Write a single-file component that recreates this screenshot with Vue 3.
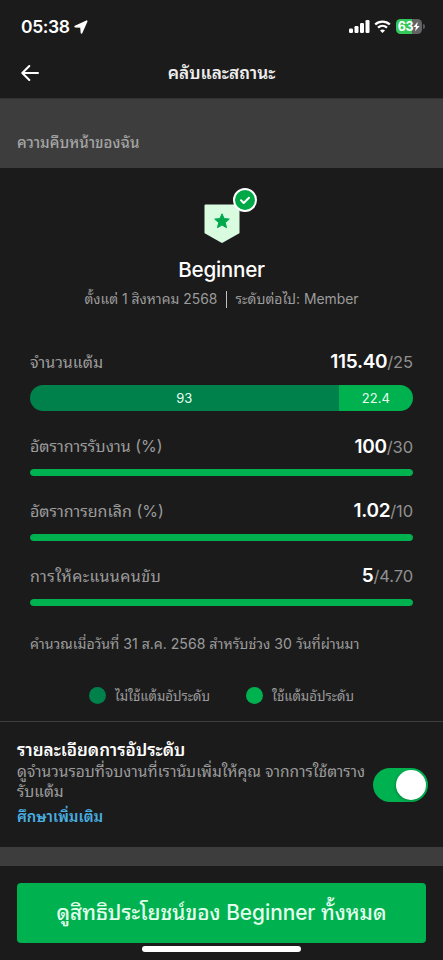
<script setup>
const points = [
  { value: '93', share: 80.6, tone: 'dark' },
  { value: '22.4', share: 19.4, tone: 'light' },
]

const metrics = [
  { label: 'อัตราการรับงาน (%)', value: '100', target: '30', progress: 100, size: 'rate' },
  { label: 'อัตราการยกเลิก (%)', value: '1.02', target: '10', progress: 100, size: 'cancel' },
  { label: 'การให้คะแนนคนขับ', value: '5', target: '4.70', progress: 100, size: 'rating' },
]
</script>

<template>
  <div class="screen">
    <div class="status-bar">
      <div class="clock">
        <span class="time">05:38</span>
        <svg class="location" viewBox="0 0 14 14"><path d="M12.700 1.200 1.200 6.600 7 7 7.500 12.900Z" /></svg>
      </div>
      <div class="indicators">
        <svg class="signal" viewBox="0 0 21 13">
          <rect x="0" y="8.500" width="4" height="4.500" rx="1.200" />
          <rect x="5.500" y="6" width="4" height="7" rx="1.200" />
          <rect x="11" y="3" width="4" height="10" rx="1.200" />
          <rect x="16.500" y="0" width="4" height="13" rx="1.200" />
        </svg>
        <svg class="wifi" viewBox="0 0 17 13">
          <path d="M1.200 4.500C5.200.6 11.800.6 15.800 4.500M4 7.700c2.600-2.400 6.400-2.400 9 0" />
          <path class="wifi-dot" d="M8.500 12.900 6 10.400c1.300-1.300 3.700-1.300 5 0Z" />
        </svg>
        <div class="battery">
          <span class="charge">63</span>
          <svg class="bolt" viewBox="0 0 8 11"><path d="M5.600.2.4 6.100h3L2.300 10.800 7.600 4.800H4.500Z" /></svg>
        </div>
        <span class="battery-tip"></span>
      </div>
    </div>

    <header class="nav">
      <svg class="back" viewBox="0 0 18 16"><path d="M17 8H1.500M8.300 1 1.300 8l7 7" /></svg>
      <h1 class="title"><span>คลับและสถานะ</span></h1>
    </header>

    <div class="section-head"><span>ความคืบหน้าของฉัน</span></div>

    <section class="profile">
      <div class="badge">
        <svg class="shield" viewBox="0 0 36 40">
          <path class="shield-body" d="M1.500.5h33a1 1 0 0 1 1 1v27.200a1 1 0 0 1-.6.9L19 38.600a2 2 0 0 1-2 0L1.100 29.600a1 1 0 0 1-.6-.9V1.500a1 1 0 0 1 1-1Z" />
          <path class="star" d="m18 9.800 2.100 4.800 5.200.5-4 3.500 1.200 5.100-4.500-2.700-4.500 2.700 1.200-5.100-4-3.500 5.200-.5Z" />
        </svg>
        <svg class="check" viewBox="0 0 24 24">
          <circle cx="12" cy="12" r="11" />
          <path d="m8 12.300 2.700 2.700 5.300-5.300" />
        </svg>
      </div>
      <h2 class="level">Beginner</h2>
      <div class="period">
        <span class="since">ตั้งแต่ 1 สิงหาคม 2568</span>
        <i class="separator"></i>
        <span class="next">ระดับต่อไป: Member</span>
      </div>
    </section>

    <section class="metrics">
      <div class="metric-row first">
        <span class="label points-label">จำนวนแต้ม</span>
        <span class="score"><b>115.40</b>/25</span>
      </div>
      <div class="points-bar">
        <div v-for="p in points" :key="p.tone" :class="['part', p.tone]" :style="{ width: p.share + '%' }">{{ p.value }}</div>
      </div>
      <div v-for="m in metrics" :key="m.label" class="metric">
        <div class="metric-row">
          <span :class="['label', m.size]">{{ m.label }}</span>
          <span class="score"><b>{{ m.value }}</b>/{{ m.target }}</span>
        </div>
        <div class="track"><div class="fill" :style="{ width: m.progress + '%' }"></div></div>
      </div>
      <p class="calculated"><span>คำนวณเมื่อวันที่ 31 ส.ค. 2568 สำหรับช่วง 30 วันที่ผ่านมา</span></p>
      <div class="legend">
        <span class="dot dark"></span><span class="legend-text unused">ไม่ใช้แต้มอัประดับ</span>
        <span class="dot light"></span><span class="legend-text used">ใช้แต้มอัประดับ</span>
      </div>
    </section>

    <section class="details">
      <div class="copy">
        <h3><span>รายละเอียดการอัประดับ</span></h3>
        <p><span class="line-one">ดูจำนวนรอบที่จบงานที่เรานับเพิ่มให้คุณ จากการใช้ตาราง</span><br /><span class="line-two">รับแต้ม</span></p>
        <a>ศึกษาเพิ่มเติม</a>
      </div>
      <div class="toggle"><div class="knob"></div></div>
    </section>

    <div class="divider"></div>

    <footer class="footer">
      <button class="cta"><span>ดูสิทธิประโยชน์ของ Beginner ทั้งหมด</span></button>
      <div class="home-indicator"></div>
    </footer>
  </div>
</template>

<style>
body { background: #1b1b1b; }
</style>

<style scoped>
* { box-sizing: border-box; }
h1, h2, h3, p { margin: 0; font-weight: inherit; }
.screen {
  width: 443px;
  height: 960px;
  overflow: hidden;
  display: flex;
  flex-direction: column;
  background: #1b1b1b;
  color: #9b9b9b;
  font-family: Inter, "Noto Sans Thai Looped", "Noto Sans", sans-serif;
  white-space: nowrap;
}
.status-bar {
  height: 53px;
  padding: 0 18px 0 21px;
  display: flex;
  align-items: center;
  justify-content: space-between;
  color: #fff;
}
.clock { display: flex; align-items: center; gap: 5px; }
.time { font-size: 17.500px; line-height: 22px; font-weight: 600; letter-spacing: -.4px; }
.location { width: 14px; height: 14px; fill: #fff; stroke: #fff; stroke-width: 1.700; stroke-linejoin: round; }
.indicators { display: flex; align-items: center; }
.signal { width: 21px; height: 13px; fill: #fff; margin-right: 4px; }
.wifi { width: 17px; height: 13px; fill: none; stroke: #fff; stroke-width: 2.300; margin-right: 5px; }
.wifi-dot { fill: #fff; stroke: none; }
.battery {
  width: 26px;
  height: 15px;
  border-radius: 4.500px;
  background: linear-gradient(90deg, #34c759 63%, #636366 63%);
  display: flex;
  align-items: center;
  justify-content: center;
}
.charge { font-size: 12.500px; line-height: 15px; font-weight: 700; letter-spacing: -.3px; }
.bolt { width: 7px; height: 11px; fill: #fff; }
.battery-tip { width: 2px; height: 5px; margin-left: 1px; border-radius: 0 2px 2px 0; background: #58585a; }
.nav {
  height: 46px;
  padding: 0 21px;
  display: grid;
  grid-template-columns: 18px 1fr 18px;
  align-items: center;
  border-bottom: 1px solid #333;
}
.back { width: 18px; height: 16px; margin-top: -6px; fill: none; stroke: #fff; stroke-width: 2; stroke-linecap: round; stroke-linejoin: round; }
.title { font-size: 17.200px; line-height: 24px; margin-top: -5px; font-weight: 600; color: #eee; text-align: center; }
.section-head { height: 69px; padding: 32px 17px 0; background: #3d3d3d; color: #a5a5a5; font-size: 15px; line-height: 24px; font-weight: 500; }
.profile { height: 174px; padding-top: 36px; display: flex; flex-direction: column; align-items: center; }
.badge { position: relative; width: 36px; height: 40px; }
.shield { display: block; width: 36px; height: 40px; }
.shield-body { fill: #d9fbdf; }
.star { fill: #00a94c; stroke: #00a94c; stroke-linejoin: round; }
.check { position: absolute; left: 29px; top: -16px; width: 24px; height: 24px; fill: #00a846; stroke: #fff; stroke-width: 2; stroke-linecap: round; stroke-linejoin: round; }
.level { margin-top: 12px; font-size: 20.700px; line-height: 28px; font-weight: 500; letter-spacing: -.3px; color: #fff; }
.period { display: flex; align-items: center; margin-top: 4px; font-size: 13.900px; line-height: 22px; }
.separator { width: 1px; height: 17px; margin: 0 8px 0 9px; background: #c0c0c0; }
.metrics { height: 379px; padding: 7px 30px 0; }
.metric-row { display: flex; align-items: center; justify-content: space-between; height: 24px; line-height: 24px; }
.label { font-size: 16px; }
.rating { letter-spacing: .4px; }
.first .label { padding-top: 1px; }
.score { padding-top: 1px; font-size: 16.500px; color: #909090; letter-spacing: -.1px; }
.score b { font-size: 19px; font-weight: 600; color: #fff; letter-spacing: -.3px; }
.points-bar { display: flex; height: 26px; margin: 12px 0 23px; overflow: hidden; border-radius: 13px; }
.part { display: flex; align-items: center; justify-content: center; color: #e8fff0; font-size: 13px; }
.dark { background: #00804a; }
.light { background: #00b14f; }
.metric { height: 64.800px; }
.track { height: 7px; margin-top: 11px; border-radius: 4px; overflow: hidden; background: #333; }
.fill { height: 7px; border-radius: 4px; background: #00b14f; }
.calculated { margin-top: 4px; font-size: 14.100px; line-height: 24px; }
.legend { margin-top: 27px; display: flex; align-items: center; padding-left: 59px; height: 24px; font-size: 13.200px; }
.dot { width: 17px; height: 17px; border-radius: 50%; }
.legend-text { margin-left: 9px; }
.unused { width: 96px; margin-right: 35px; }
.details { height: 126px; padding: 15px 15px 0 17px; border-top: 1px solid #3d3d3d; display: flex; justify-content: space-between; }
.copy { width: 350px; }
h3 { font-size: 17.100px; line-height: 25px; font-weight: 600; color: #fff; }
.copy p { font-size: 15.500px; line-height: 20px; }
.copy a { display: inline-block; margin-top: 3px; font-size: 14.900px; line-height: 24px; font-weight: 600; color: #49aee0; }
.toggle { flex: none; width: 55px; height: 34px; margin-top: 31px; padding: 2px; border-radius: 17px; background: #00b14f; display: flex; justify-content: flex-end; }
.knob { width: 30px; height: 30px; border-radius: 50%; background: #fff; box-shadow: -1px 1px 3px #0003; }
.divider { height: 19px; background: #3d3d3d; }
.footer { flex: 1; padding: 17px 17px 0; }
.cta { display: flex; align-items: center; justify-content: center; width: 409px; height: 60px; border: 0; border-radius: 4px; background: #00b14f; color: #e4ffed; font: 500 20.800px/30px Inter, "Noto Sans Thai Looped", "Noto Sans", sans-serif; white-space: nowrap; }
.home-indicator { width: 159px; height: 6px; margin: 3px auto 0; border-radius: 3px; background: #fff; }
</style>
